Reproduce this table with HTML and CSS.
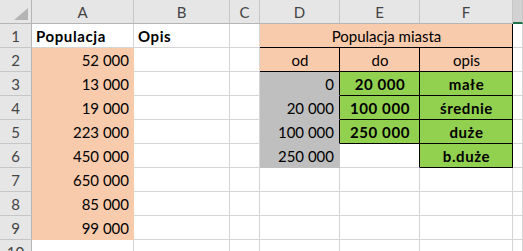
FILE: index.html
```html
<!DOCTYPE html>
<html lang="pl">
<head>
    <meta charset="UTF-8">
    <title>Populacja miasta</title>
    <link rel="stylesheet" href="styles.css">
</head>
<body>
    <div class="sheet">
        <!-- column headers -->
        <div class="hd corner">
            <svg width="14" height="12" viewBox="0 0 14 12"><polygon points="14,0 14,12 0,12" fill="#b4b4b4"/></svg>
        </div>
        <div class="hd">A</div>
        <div class="hd">B</div>
        <div class="hd">C</div>
        <div class="hd">D</div>
        <div class="hd">E</div>
        <div class="hd">F</div>
        <div class="hd active"></div>

        <!-- row 1 -->
        <div class="rh">1</div>
        <div class="c b">Populacja</div>
        <div class="c b">Opis</div>
        <div class="c"></div>
        <div class="c peach ctr dark-r dark-b span3">Populacja miasta</div>
        <div class="c"></div>

        <!-- row 2 -->
        <div class="rh">2</div>
        <div class="c peach r">52 000</div>
        <div class="c"></div>
        <div class="c"></div>
        <div class="c peach ctr dark-r dark-b">od</div>
        <div class="c peach ctr dark-r dark-b">do</div>
        <div class="c peach ctr dark-r dark-b">opis</div>
        <div class="c"></div>

        <!-- row 3 -->
        <div class="rh">3</div>
        <div class="c peach r">13 000</div>
        <div class="c"></div>
        <div class="c"></div>
        <div class="c grey r num dark-r">0</div>
        <div class="c green ctr b dark-r dark-b">20 000</div>
        <div class="c green ctr b dark-r dark-b">małe</div>
        <div class="c"></div>

        <!-- row 4 -->
        <div class="rh">4</div>
        <div class="c peach r">19 000</div>
        <div class="c"></div>
        <div class="c"></div>
        <div class="c grey r num dark-r">20 000</div>
        <div class="c green ctr b dark-r dark-b">100 000</div>
        <div class="c green ctr b dark-r dark-b">średnie</div>
        <div class="c"></div>

        <!-- row 5 -->
        <div class="rh">5</div>
        <div class="c peach r">223 000</div>
        <div class="c"></div>
        <div class="c"></div>
        <div class="c grey r num dark-r">100 000</div>
        <div class="c green ctr b dark-r dark-b">250 000</div>
        <div class="c green ctr b dark-r dark-b">duże</div>
        <div class="c"></div>

        <!-- row 6 -->
        <div class="rh">6</div>
        <div class="c peach r">450 000</div>
        <div class="c"></div>
        <div class="c"></div>
        <div class="c grey r num">250 000</div>
        <div class="c dark-r"></div>
        <div class="c green ctr b dark-r dark-b">b.duże</div>
        <div class="c"></div>

        <!-- row 7 -->
        <div class="rh">7</div>
        <div class="c peach r">650 000</div>
        <div class="c"></div><div class="c"></div><div class="c"></div>
        <div class="c"></div><div class="c"></div><div class="c"></div>

        <!-- row 8 -->
        <div class="rh">8</div>
        <div class="c peach r">85 000</div>
        <div class="c"></div><div class="c"></div><div class="c"></div>
        <div class="c"></div><div class="c"></div><div class="c"></div>

        <!-- row 9 -->
        <div class="rh">9</div>
        <div class="c peach r">99 000</div>
        <div class="c"></div><div class="c"></div><div class="c"></div>
        <div class="c"></div><div class="c"></div><div class="c"></div>

        <!-- row 10, cut by the window -->
        <div class="rh">10</div>
        <div class="c"></div><div class="c"></div><div class="c"></div>
        <div class="c"></div><div class="c"></div><div class="c"></div>
        <div class="c"></div>
    </div>
</body>
</html>
```

FILE: styles.css
```css
* {
    margin: 0;
    padding: 0;
    box-sizing: border-box;
}

body {
    width: 523px;
    height: 251px;
    overflow: hidden;
    background: #fff;
    font-family: Lato, "Open Sans", sans-serif;
    font-size: 15px;
    color: #000;
}

/* spreadsheet grid: row header, A..F, and a bit of G */
.sheet {
    display: grid;
    grid-template-columns: 32px 102px 96px 30px 80px 80px 93px 1fr;
    grid-template-rows: repeat(10, 24px) 11px;
}

.hd,
.rh,
.c {
    display: flex;
    align-items: center;
    line-height: 18px;
    white-space: nowrap;
    overflow: hidden;
    border-right: 1px solid #d4d4d4;
    border-bottom: 1px solid #d4d4d4;
}

/* headers */
.hd {
    justify-content: center;
    background: #e6e6e6;
    color: #444;
    border-right-color: #c6c6c6;
    border-bottom-color: #b5b5b5;
}

.hd.corner {
    justify-content: flex-end;
    align-items: flex-end;
    padding: 0 3px 3px 0;
    border-right-color: #b5b5b5;
}

.hd.active {
    background: #d2d2d2;
    border-bottom: 2px solid #217346;
}

.rh {
    justify-content: center;
    background: #e6e6e6;
    color: #444;
    border-right-color: #b5b5b5;
    border-bottom-color: #c6c6c6;
}

/* last row only shows its top part */
.sheet > :nth-last-child(-n+8) {
    align-items: flex-start;
    padding-top: 3px;
    border-bottom: none;
}

/* cells */
.c {
    padding: 1px 3px 0 4px;
}

.c.r {
    justify-content: flex-end;
    padding-right: 4px;
}

.c.num {
    padding-right: 5px;
}

.c.ctr {
    justify-content: center;
}

.c.b {
    font-weight: bold;
    letter-spacing: 0.6px;
}

.span3 {
    grid-column: span 3;
}

/* fills hide the gridlines under them */
.peach {
    background: #f8cbad;
    border-color: #f8cbad;
}

.green {
    background: #92d050;
    border-color: #92d050;
}

.grey {
    background: #bfbfbf;
    border-color: #bfbfbf;
}

/* thin black table borders */
.dark-r {
    border-right-color: #000;
}

.dark-b {
    border-bottom-color: #000;
}
```
